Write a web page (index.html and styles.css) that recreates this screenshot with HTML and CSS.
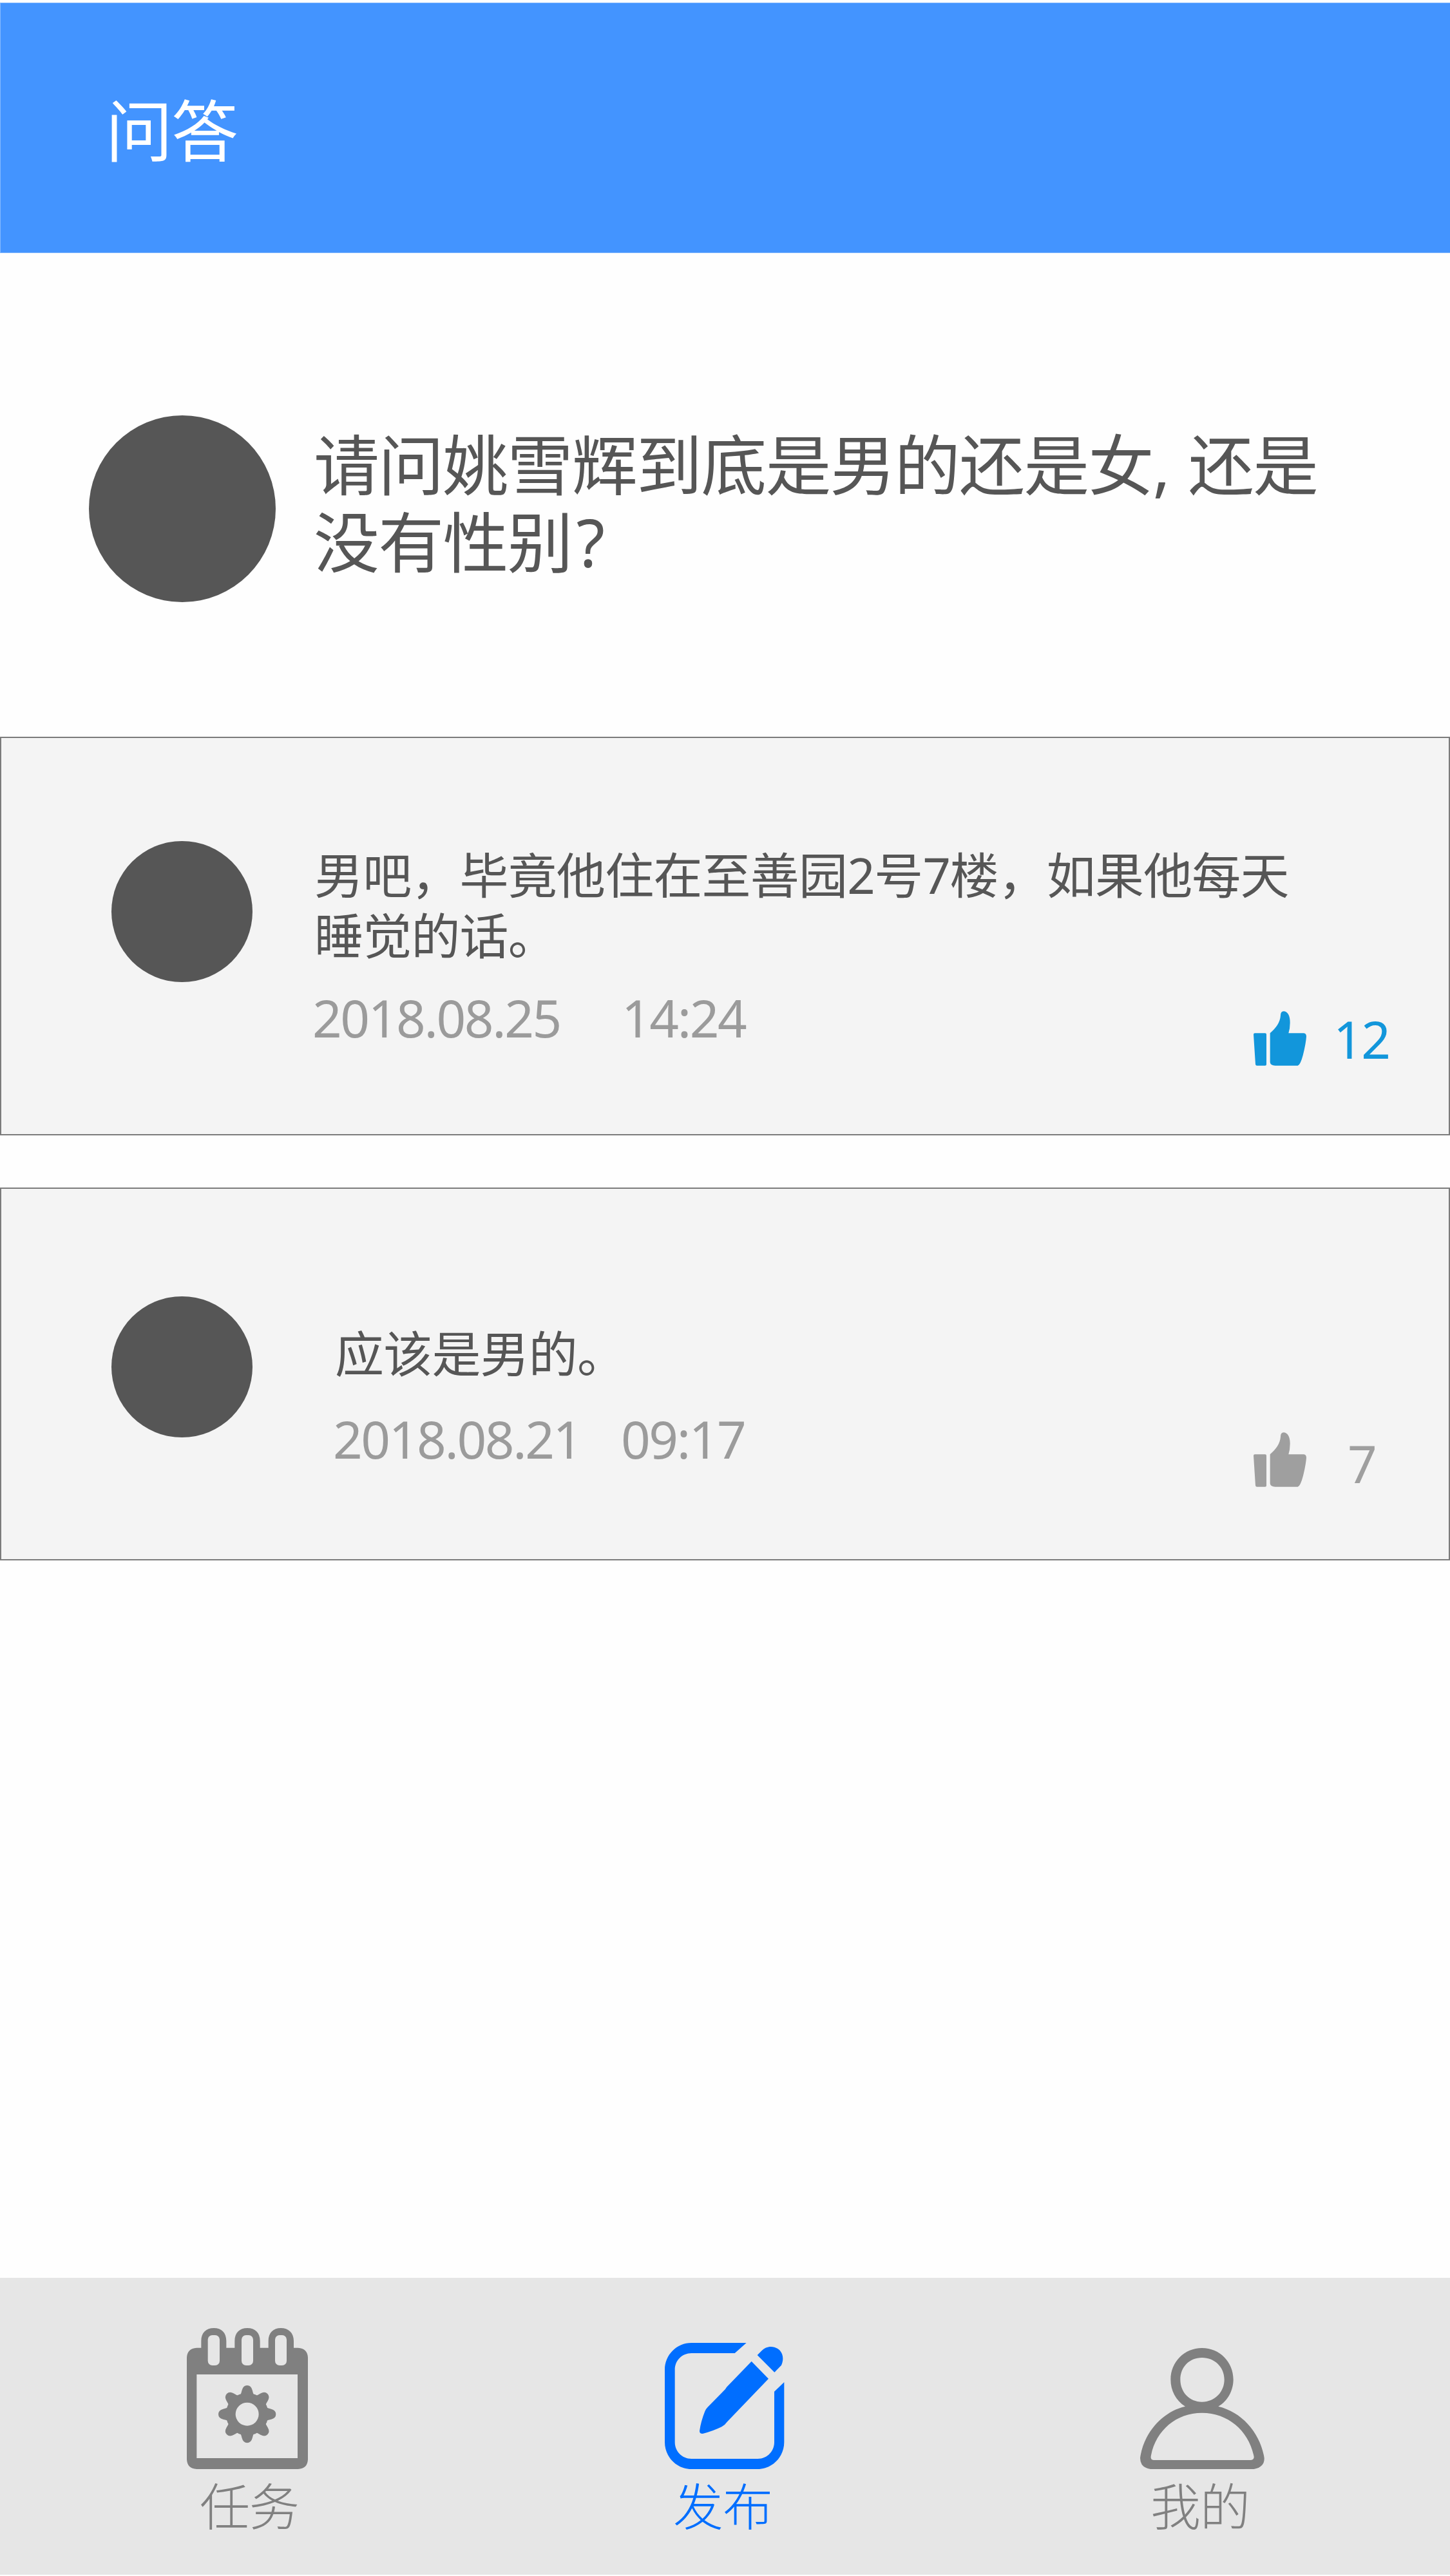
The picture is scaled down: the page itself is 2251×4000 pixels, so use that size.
FILE: index.html
```html
<!DOCTYPE html>
<html lang="zh-CN">
<head>
<meta charset="utf-8">
<title>问答</title>
<link rel="stylesheet" href="styles.css">
</head>
<body>
<div class="app">
  <header class="topbar"><h1 class="topbar-title">问答</h1></header>

  <main class="content">
    <section class="question">
      <div class="avatar avatar-large"></div>
      <p class="question-text">请问姚雪辉到底是男的还是女, 还是<br>没有性别<span class="mark">?</span></p>
    </section>

    <article class="answer answer-first">
      <div class="avatar"></div>
      <div class="answer-body">
        <p class="answer-text">男吧，毕竟他住在至善园<span class="num">2</span>号<span class="num">7</span>楼，如果他每天<br>睡觉的话。</p>
        <div class="meta"><span>2018.08.25</span><span>14:24</span></div>
      </div>
      <div class="like liked">
        <svg class="thumb" viewBox="0 0 246 254"><path d="M6 102h48q6 0 6 6v140q0 6-6 6H16q-6 0-7-6L0 108q0-6 6-6zM77 102C104 80 124 52 126 20Q126 0 140 0C158 0 171 20 170 54Q170 80 163 102H234Q246 103 246 118Q244 150 230 206Q218 251 206 254H101Q79 253 77 238z"/></svg>
        <span class="like-count">12</span>
      </div>
    </article>

    <article class="answer answer-second">
      <div class="avatar"></div>
      <div class="answer-body">
        <p class="answer-text">应该是男的。</p>
        <div class="meta"><span>2018.08.21</span><span>09:17</span></div>
      </div>
      <div class="like">
        <svg class="thumb" viewBox="0 0 246 254"><path d="M6 102h48q6 0 6 6v140q0 6-6 6H16q-6 0-7-6L0 108q0-6 6-6zM77 102C104 80 124 52 126 20Q126 0 140 0C158 0 171 20 170 54Q170 80 163 102H234Q246 103 246 118Q244 150 230 206Q218 251 206 254H101Q79 253 77 238z"/></svg>
        <span class="like-count">7</span>
      </div>
    </article>
  </main>

  <nav class="tabbar">
    <a class="tab tab-task">
      <svg class="tab-icon" viewBox="0 0 600 660">
        <path fill-rule="evenodd" d="M46 92H67V60C67 22 90 0 126 0S184 22 184 60V92H223V60C223 22 246 0 282 0S341 22 341 60V92H380V60C380 22 403 0 438 0S498 22 498 60V92H518Q562 94 564 138V612Q562 655 518 657H46Q2 655 0 612V138Q2 94 46 92zM46 216V606H516V216z"/>
        <g class="slot"><rect x="98" y="33" width="55" height="141" rx="21"/><rect x="255" y="33" width="54" height="141" rx="21"/><rect x="411" y="33" width="54" height="141" rx="21"/></g>
        <g transform="translate(281 401)">
          <circle r="99"/>
          <path id="tooth" d="M-34-84Q-27-96-24-112Q-18-134 0-134T24-112Q27-96 34-84z"/>
          <use href="#tooth" transform="rotate(45)"/><use href="#tooth" transform="rotate(90)"/><use href="#tooth" transform="rotate(135)"/><use href="#tooth" transform="rotate(180)"/><use href="#tooth" transform="rotate(225)"/><use href="#tooth" transform="rotate(270)"/><use href="#tooth" transform="rotate(315)"/>
          <circle class="slot" r="54"/>
        </g>
      </svg>
      <span class="tab-label">任务</span>
    </a>
    <a class="tab tab-post active">
      <svg class="tab-icon" viewBox="0 0 600 660">
        <path d="M380 69H124C56 69 0 125 0 194V532C0 601 56 657 124 657H432C500 657 556 601 556 532V252L510 296V532C510 575 476 609 433 609H124C81 609 47 575 47 532V194C47 151 81 117 124 117H326z"/>
        <path d="M404 155L483 236L290 437Q280 452 265 460Q225 480 177 492Q162 493 162 479Q168 436 187 388Q191 377 200 368L281 286Q285 280 288 275zM431 126L452 105C470 86 500 80 526 96C552 113 556 147 543 173L511 206z"/>
      </svg>
      <span class="tab-label">发布</span>
    </a>
    <a class="tab tab-mine">
      <svg class="tab-icon" viewBox="0 0 600 660">
        <path fill-rule="evenodd" d="M210 365C165 337 142 290 142 240C142 158 206 93 288 93S434 158 434 240C434 290 408 340 364 365C475 391 560 490 578 605Q580 648 530 657H48Q0 650 0 605C15 490 103 389 210 365zM288 138C229 138 187 182 187 240S229 344 288 344S392 298 392 240S347 138 288 138zM50 598Q48 614 62 615H516Q530 614 530 600C508 480 410 395 288 395S70 480 50 598z"/>
      </svg>
      <span class="tab-label">我的</span>
    </a>
  </nav>
</div>
</body>
</html>
```
FILE: styles.css
```css
* {
  box-sizing: border-box;
}

body {
  margin: 0;
  background: #fefefe;
  color: #565656;
  font-family: "Noto Sans CJK SC", sans-serif;
}

h1,
p {
  margin: 0;
  font-weight: inherit;
}

.app {
  width: 2251px;
  height: 4000px;
  display: flex;
  flex-direction: column;
  padding: 4px 0 2px;
}

/* Header */
.topbar {
  height: 389px;
  flex: none;
  display: flex;
  align-items: center;
  padding: 0 0 2px 163px;
  background: #4394ff;
  border: 1px solid #84b8fd;
  border-right: 0;
}

.topbar-title {
  color: #fff;
  font-size: 104px;
  font-weight: 400;
  line-height: 120px;
  letter-spacing: -2px;
}

.content {
  flex: 1;
}

/* Question */
.question {
  height: 751px;
  display: flex;
  align-items: flex-start;
  gap: 59px;
  padding: 252px 0 0 138px;
}

.avatar {
  flex: none;
  width: 219px;
  height: 219px;
  border-radius: 50%;
  background: #565656;
}

.avatar-large {
  width: 290px;
  height: 290px;
}

.question-text {
  margin-top: 17px;
  font-family: "Noto Sans", "Noto Sans CJK SC", sans-serif;
  font-size: 102px;
  font-weight: 400;
  line-height: 120px;
  letter-spacing: -1.8px;
  word-spacing: 5px;
  white-space: nowrap;
}

.mark {
  padding-left: 7px;
}

/* Answers */
.answer {
  display: flex;
  align-items: flex-start;
  padding-left: 171px;
  background: #f4f4f4;
  border: 2px solid #7b7b7b;
}

.answer-first {
  height: 619px;
  padding-top: 160px;
}

.answer-second {
  height: 579px;
  margin-top: 81px;
  padding-top: 167px;
}

.answer-body {
  width: 1552px;
  margin-left: 96px;
}

.answer-second .answer-body {
  width: 1520px;
  margin-left: 128px;
}

.answer-first .answer-body {
  padding-top: 4px;
}

.answer-second .answer-body {
  padding-top: 40px;
}

.answer-text {
  font-size: 76px;
  font-weight: 400;
  line-height: 90px;
  letter-spacing: -0.8px;
  white-space: nowrap;
}

.num {
  font-family: "Noto Sans", sans-serif;
  letter-spacing: -1.5px;
}

.meta {
  display: flex;
  margin: 41px 0 0 -3px;
  color: #9b9b9b;
  font-family: "Noto Sans", sans-serif;
  font-size: 80px;
  line-height: 90px;
  letter-spacing: -2.4px;
}

.answer-second .meta {
  margin-top: 46px;
}

.meta span:first-child {
  width: 480px;
}

.answer-second .meta span:first-child {
  width: 447px;
}

.like {
  display: flex;
  align-items: flex-start;
  color: #9f9f9f;
}

.answer-first .like {
  margin: 264px 0 0 -94px;
}

.answer-second .like {
  margin: 211px 0 0 -94px;
}

.answer-first .liked {
  color: #1296db;
}

.thumb {
  width: 82px;
  height: 85px;
  fill: currentColor;
}

.like-count {
  margin: 13px 0 0 42px;
  font-family: "Noto Sans", sans-serif;
  font-size: 80px;
  line-height: 60px;
  letter-spacing: -2.4px;
}

.answer-second .like-count {
  margin: 18px 0 0 64px;
}

/* Bottom tabs */
.tabbar {
  height: 461px;
  flex: none;
  display: grid;
  grid-template-columns: 742px 738px 1fr;
  padding-left: 290px;
  background: #e6e6e6;
}

.tab {
  display: flex;
  flex-direction: column;
  padding-top: 78px;
  color: #808080;
}

.active {
  color: #006eff;
}

.tab-icon {
  width: 200px;
  height: 220px;
  fill: currentColor;
}

.slot {
  fill: #e6e6e6;
}

.tab-label {
  margin: 8px 0 0 16px;
  font-size: 78px;
  font-weight: 300;
  line-height: 90px;
  letter-spacing: -1px;
}

.tab-task .tab-label {
  margin-left: 20px;
}

.tab-post .tab-label {
  margin-left: 13px;
}
```
